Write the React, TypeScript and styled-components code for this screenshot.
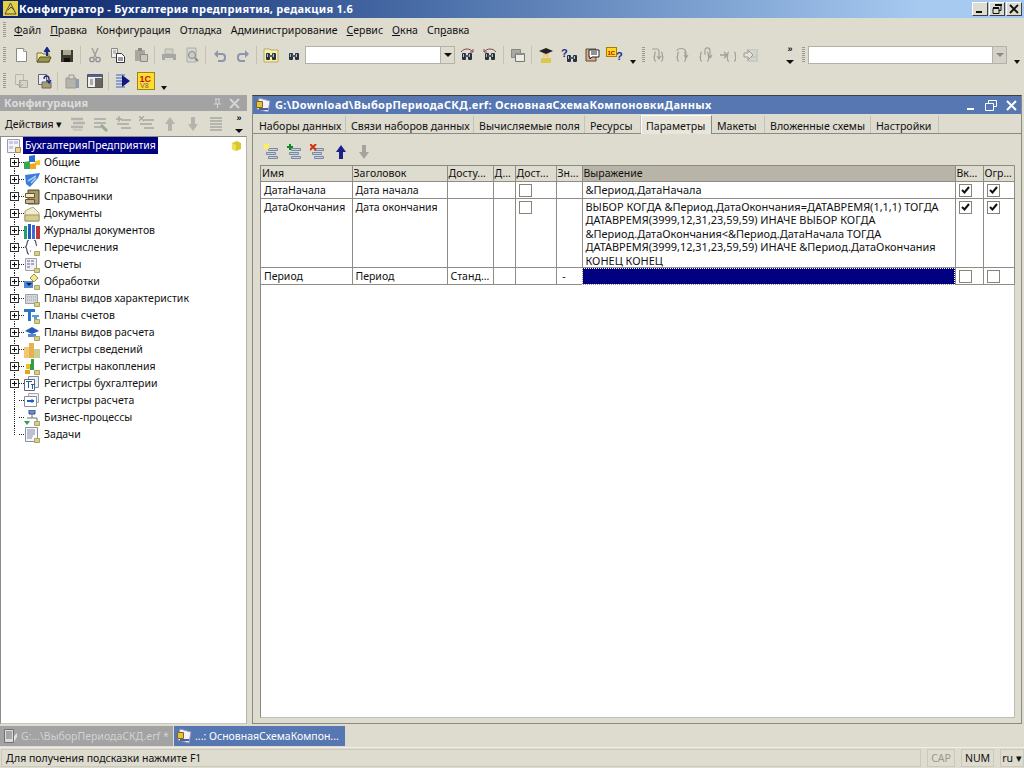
import React from 'react';
import styled, {createGlobalStyle} from 'styled-components';

const GlobalStyle = createGlobalStyle`
  html, body {
    margin: 0;
    padding: 0;
    background: #dedbcf;
  }
  * {
    box-sizing: border-box;
  }
`

const uiFont = `"Noto Sans", "Liberation Sans", sans-serif`

type IconProps = { children: React.ReactNode, size?: number }

const Ico = ({children, size = 16}: IconProps) => (
    <svg width={size} height={size} viewBox="0 0 16 16">{children}</svg>
)

// toolbar icons
const NewIcon = () => <Ico><path d="M3.500 1.500h7l3 3v10h-10z" fill="#fff" stroke="#8a8a80"/><path d="M10.500 1.500v3h3" fill="#e8e8e0" stroke="#a0a098"/></Ico>
const OpenIcon = () => <Ico><path d="M1 6h5l1 1h6v8H1z" fill="#f0e8a8" stroke="#7a7440"/><path d="M1 15l3-5h11l-2 5z" fill="#9c9448" stroke="#5a5628"/><path d="M11 9V3M8.500 5L11 1l2.500 4" stroke="#1a2a80" strokeWidth="2" fill="#1a2a80"/></Ico>
const SaveIcon = () => <Ico><path d="M2 3h12v12H2z" fill="#3c3c30"/><path d="M4 3h8v5H4z" fill="#a8a890"/><path d="M5 11h6v4H5z" fill="#111"/></Ico>
const CutIcon = () => <Ico><path d="M5 1l4 9M11 1L7 10" stroke="#a0a09c" strokeWidth="1.500" fill="none"/><circle cx="5" cy="12.500" r="2.200" fill="none" stroke="#8e9098" strokeWidth="1.300"/><circle cx="11" cy="12.500" r="2.200" fill="none" stroke="#8e9098" strokeWidth="1.300"/></Ico>
const CopyIcon = () => <Ico><path d="M1.500 1.500h6v9h-6z" fill="#eeeee8" stroke="#8a8a84"/><path d="M3 4h3M3 6h3" stroke="#8a8a84"/><path d="M6.500 6.500h5l3 3v6h-8z" fill="#fff" stroke="#333340"/><path d="M8 11h5M8 13h5" stroke="#333340"/></Ico>
const PasteIcon = () => <Ico><path d="M2 3h10v11H2z" fill="#a8a89e"/><path d="M5 1h4v3H5z" fill="#8a8a84"/><path d="M7.500 7.500h7v7h-7z" fill="#c8c8c0" stroke="#8a8a84"/></Ico>
const PrintIcon = () => <Ico><path d="M4 2h8v5H4z" fill="#cfcfc8" stroke="#b0b0a8"/><path d="M1 7h14v6H1z" fill="#a8a8a2"/><path d="M4 11h8v3H4z" fill="#d8d8d0"/></Ico>
const PreviewIcon = () => <Ico><path d="M3 1h9v14H3z" fill="#d4d4cc" stroke="#b0b0a8"/><circle cx="8" cy="8" r="3.500" fill="#c8ccd0" stroke="#8a8a84"/><path d="M11 11l3 3" stroke="#8a8a84" strokeWidth="2"/></Ico>
const UndoIcon = () => <Ico><path d="M6 3L2 7l4 4z" fill="#8f96ac"/><path d="M4 7h6a3 3 0 0 1 3 3v1a3 3 0 0 1-3 3H6" stroke="#8f96ac" strokeWidth="2" fill="none"/></Ico>
const RedoIcon = () => <Ico><path d="M10 3l4 4-4 4z" fill="#8f96ac"/><path d="M12 7H6a3 3 0 0 0-3 3v1a3 3 0 0 0 3 3h4" stroke="#8f96ac" strokeWidth="2" fill="none"/></Ico>
const Glasses = ({x = 3, y = 6}: { x?: number, y?: number }) => (
    <g><rect x={x} y={y} width="4" height="7" rx="1" fill="#2c3040"/><rect x={x + 6} y={y} width="4" height="7" rx="1" fill="#2c3040"/><rect x={x + 3} y={y + 2} width="4" height="2" fill="#556"/><rect x={x + 1} y={y + 1} width="1" height="3" fill="#9cc"/><rect x={x + 7} y={y + 1} width="1" height="3" fill="#9cc"/></g>
)
const FindFolderIcon = () => <Ico><path d="M1 2h6l1 1h7v12H1z" fill="#f6eea8" stroke="#b4ac68"/><Glasses/></Ico>
const BinocIcon = () => <Ico><Glasses/></Ico>
const BinocNextIcon = () => <Ico><Glasses/><path d="M2 5c3-4 9-4 12 0M14 5l0-3M14 5l-3 0" stroke="#804848" fill="none"/></Ico>
const BinocPrevIcon = () => <Ico><Glasses/><path d="M2 5c3-4 9-4 12 0M2 5l0-3M2 5l3 0" stroke="#804848" fill="none"/></Ico>
const WindowsIcon = () => <Ico><path d="M1.500 2.500h9v8h-9z" fill="#a8a8a2" stroke="#888880"/><path d="M5.500 6.500h9v8h-9z" fill="#ecebe4" stroke="#777770"/><path d="M5 6h10v2H5z" fill="#8c8c86"/></Ico>
const HatIcon = () => <Ico><path d="M5 6h6v4H5z" fill="#f0c890"/><path d="M3 11h10v5H3z" fill="#d8c850"/><path d="M1 4l7-3 7 3-7 3z" fill="#222"/></Ico>
const HelpBinIcon = () => <Ico><text x="0" y="10" fontFamily="Liberation Sans" fontWeight="700" fontSize="11" fill="#1c2c90">?</text><Glasses x={6} y={8}/></Ico>
const ChatIcon = () => <Ico><path d="M2 2h10v12H2z" fill="#e0a888" stroke="#505030"/><path d="M5 3h10v7H8l-2 2v-2H5z" fill="#fff" stroke="#223"/><path d="M7 5h6M7 7h6" stroke="#223"/></Ico>
const OneCHelpIcon = () => (
    <svg width="18" height="16" viewBox="0 0 18 16">
        <rect x="0.500" y="0.500" width="10" height="9" fill="#ffd820" stroke="#a08000"/>
        <text x="1.500" y="7.500" fontFamily="Liberation Sans" fontWeight="700" fontSize="6" fill="#b00">1C</text>
        <text x="10" y="13" fontFamily="Liberation Sans" fontWeight="700" fontSize="11" fill="#1c2c90">?</text>
    </svg>
)
const Braces = ({x = 0}: { x?: number }) => (
    <path transform={`translate(${x} 0)`} d="M5 5c-2 0-1 3-1.500 4.500C3 10 3 10 3 10c1 .5-.5 4 2 4.500M10 5c2 0 1 3 1.500 4.500.5.500.5.500.5.500-1 .5.500 4-2 4.500" stroke="#a0a09a" strokeWidth="1.200" fill="none"/>
)
const DebugInIcon = () => <Ico><Braces/><path d="M1 2h5c2 0 2 2 2 3v6M6 9l2 3 2-3" stroke="#a0a09a" strokeWidth="1.200" fill="none"/></Ico>
const DebugOverIcon = () => <Ico><Braces/><path d="M3 4c0-3 8-4 9 1v5M10 8l2 3 2-3" stroke="#a0a09a" strokeWidth="1.200" fill="none"/></Ico>
const DebugOutIcon = () => <Ico><Braces/><path d="M8 8V3c0-3 5-3 5 1v6M11 8l2 3 2-3" stroke="#a0a09a" strokeWidth="1.200" fill="none"/></Ico>
const DebugToIcon = () => <Ico><Braces x={4}/><path d="M0 8h6M4 5l3 3-3 3" stroke="#a0a09a" strokeWidth="1.300" fill="none"/></Ico>
const RunToIcon = () => <Ico><path d="M4 2h11v13H4z" fill="#c8c8c4"/><path d="M6 4h7M6 6h7M9 8h4M6 12h7" stroke="#dededa"/><path d="M1 6h4V3l5 5-5 5v-3H1z" fill="#e4e2d8" stroke="#9c9c94"/></Ico>

const Dis1Icon = () => <Ico><path d="M2.500 1.500h8v10h-8z" fill="none" stroke="#b8b8b0"/><path d="M6.500 7.500h8v7h-8z" fill="#d4d2c6" stroke="#acaca4"/><path d="M4 11l3 3 3-3M7 14V7" stroke="#a8a8a0" fill="none"/></Ico>
const Dis2Icon = () => <Ico><path d="M2.500 1.500h8v10h-8z" fill="#e8eef4" stroke="#667"/><path d="M6 9h9v6H6z" fill="#a8a068" stroke="#667"/><path d="M8 6c0-4 5-4 5 0v3M11 7l2 3 2-3" stroke="#1c2a80" fill="none" strokeWidth="1.300"/></Ico>
const Dis3Icon = () => <Ico><path d="M2 5h10v10H2z" fill="#b4b4ac" stroke="#9a9a94"/><path d="M5 2h5v4H5z" fill="#d8d8d0" stroke="#9a9a94"/><path d="M12 6h3v9h-3z" fill="#8c9caa"/></Ico>
const FormIcon = () => <Ico><path d="M.500 1.500h15v13H.500z" fill="#eeeeea" stroke="#555"/><path d="M1 2h14v2H1z" fill="#5060a0"/><path d="M8 5h7v9H8z" fill="#66665e"/><path d="M3 7h3M3 9h3M3 11h3" stroke="#667"/></Ico>
const RunIcon = () => <Ico><path d="M1 2h9M1 5h9M1 8h9M1 11h9M1 14h9" stroke="#6c8cd0" strokeWidth="1.400"/><path d="M7 2l8 6-8 6z" fill="#101880"/></Ico>
const V8Icon = () => (
    <svg width="18" height="18" viewBox="0 0 18 18">
        <rect x="0.500" y="0.500" width="17" height="17" fill="#ffdc30" stroke="#a08418"/>
        <text x="2.500" y="9.500" fontFamily="Liberation Sans" fontWeight="700" fontSize="9" fill="#c01010">1C</text>
        <text x="3" y="16" fontFamily="Liberation Sans" fontSize="7" fill="#666">V8</text>
    </svg>
)

const RowsBase = ({color = '#a8acb4'}: { color?: string }) => (
    <path d="M4.500 4.500h9v2h-9zM2.500 8.500h9v2h-9zM4.500 12.500h9v2h-9z" fill="#c8d0dc" stroke={color}/>
)
const RowsNew = () => <Ico><RowsBase color="#7a88a8"/><path d="M0 0h5v5H0z" fill="#ffee60"/></Ico>
const RowsAdd = () => <Ico><RowsBase color="#7a88a8"/><path d="M3 0v6M0 3h6" stroke="#0a8a20" strokeWidth="2"/></Ico>
const RowsDel = () => <Ico><RowsBase color="#7a88a8"/><path d="M0 0l6 6M6 0l-6 6" stroke="#d03010" strokeWidth="2"/></Ico>
const RowsGrayA = () => <Ico><path d="M1 3h12M3 7h12M1 11h12" stroke="#b4b4ae" strokeWidth="2.500"/><path d="M3 14h9" stroke="#b4b4ae"/></Ico>
const RowsGrayB = () => <Ico><path d="M1 3h12M1 7h12M1 11h7" stroke="#b4b4ae" strokeWidth="2"/><path d="M8 9l6 6" stroke="#9aa890" strokeWidth="3"/></Ico>
const RowsGrayC = () => <Ico><path d="M5 4h10M1 8h12M5 12h10" stroke="#b4b4ae" strokeWidth="2"/><path d="M3 0v6M0 3h6" stroke="#a8a8a2" strokeWidth="1.400"/></Ico>
const RowsGrayD = () => <Ico><path d="M5 4h10M1 8h12M5 12h10" stroke="#b4b4ae" strokeWidth="2"/><path d="M0 0l5 5M5 0l-5 5" stroke="#a8a8a2" strokeWidth="1.400"/></Ico>
const ArrowUpIcon = ({color}: { color: string }) => <Ico><path d="M8 1l5 7h-3v7H6V8H3z" fill={color}/></Ico>
const ArrowDownIcon = ({color}: { color: string }) => <Ico><path d="M6 1h4v7h3l-5 7-5-7h3z" fill={color}/></Ico>
const SortGrayIcon = () => <Ico><path d="M2 2h12M2 5h12M2 8h12M2 11h12M2 14h12" stroke="#b4b4ae" strokeWidth="2"/></Ico>

// tree icons
const Mark = () => <path d="M10.500 11.500h5v4h-5z" fill="#d8d088" stroke="#a8a468"/>
const RootIcon = () => <Ico><path d="M1.500 1.500h12v13h-12z" fill="#f4f4f8" stroke="#9a9ab0"/><path d="M3 3h4v3H3zM8 3h4v3H8zM3 8h4v3H3z" fill="#d0c8e0"/><path d="M9.500 9.500h5v5h-5z" fill="#f0d088" stroke="#a09050"/></Ico>
const CommonIcon = () => <Ico><path d="M5 1l6-1v7H5z" fill="#2c6cd0"/><path d="M0 7l6-1v8H0z" fill="#38a850"/><path d="M11 6l5-1v5h-5z" fill="#f4c420"/><path d="M6 9l6-1v6H6z" fill="#f0a820"/></Ico>
const ConstIcon = () => <Ico><path d="M1 3l15-2-2 5-8 9-4-3z" fill="#3c7cdc"/><path d="M4 9l8-5M7 11l5-5" stroke="#a8d0f8" strokeWidth="1.500"/></Ico>
const CatalogIcon = () => <Ico><path d="M4 1h11v14H4z" fill="#a89868" stroke="#504830"/><path d="M1.500 4.500h9v4h-9z" fill="#f0e8c0" stroke="#605838"/><path d="M1.500 10.500h9v4h-9z" fill="#c8b888" stroke="#605838"/></Ico>
const DocsIcon = () => <Ico><path d="M1 5l8-4 6 6v8H1z" fill="#f0ecd0" stroke="#a8a478"/><path d="M1 9h14v6H1z" fill="#d8cc90" stroke="#a09868"/></Ico>
const JournalIcon = () => <Ico><path d="M0 3h3v13H0z" fill="#20a070"/><path d="M4 1h3v15H4z" fill="#2858c0"/><path d="M8 2h3v14H8z" fill="#3c6cd4"/><path d="M12 3h4v13h-4z" fill="#c03830"/></Ico>
const EnumIcon = () => <Ico><path d="M5 0C2 0 4 6 1.500 7 4 8 2 14 5 14M10 0c3 0 1 5 3 6" stroke="#404860" strokeWidth="1.100" fill="none"/><path d="M6 11h1" stroke="#404860"/><Mark/></Ico>
const ReportIcon = () => <Ico><path d="M1.500 1.500h11v12h-11z" fill="#f0f0f4" stroke="#a0a0a8"/><path d="M3 3h3v2H3zM7 3h3v2H7zM3 6h3v2H3zM7 6h3v2H7zM3 9h3v2H3z" fill="#a8a8c0"/><Mark/></Ico>
const ProcessIcon = () => <Ico><path d="M10 0l4 4-4 4-4-4z" fill="#f4e890" stroke="#a09040"/><path d="M0 7h9v7H0z" fill="#5088d8"/><path d="M2 9l3 3 3-3" fill="#123"/><Mark/></Ico>
const PlanCharIcon = () => <Ico><path d="M1.500 3.500h12v9h-12z" fill="#d8d8dc" stroke="#98a0a8"/><path d="M3 6h9M3 9h9" stroke="#9098a0" strokeDasharray="1 1"/><Mark/></Ico>
const PlanAccIcon = () => <Ico><path d="M0 1h11v3H0zM4 4h3v9H4z" fill="#2878c8"/><path d="M8 7h7v2H8zM10 9h3v3h-3z" fill="#50a0d8"/><Mark/></Ico>
const PlanCalcIcon = () => <Ico><path d="M1 6l7-4 7 4-7 3z" fill="#2858b8"/><path d="M4 9h8v3H4z" fill="#5888d8"/><Mark/></Ico>
const RegInfoIcon = () => <Ico><path d="M0 5h5v11H0z" fill="#f0c870"/><path d="M5 1h5v15H5z" fill="#e8b050"/><path d="M10 7h6v9h-6z" fill="#c8d090"/></Ico>
const RegAccIcon = () => <Ico><path d="M7 0h3v5H7z" fill="#30a040"/><path d="M2 5h4v5H2z" fill="#f0c020"/><path d="M6 5h4v6H6z" fill="#30a040"/><path d="M1 11h5v4H1z" fill="#e8a020"/><Mark/></Ico>
const RegBuhIcon = () => <Ico><path d="M4.500 .5h10v11h-10z" fill="#f0f0f4" stroke="#8890a0"/><path d="M.500 3.500h10v11h-10z" fill="#fff" stroke="#606878"/><path d="M2 5h6v1H2zM4 6h1v6H4zM7 8h3v1H7zM8 9h1v4H8z" fill="#2060a8"/></Ico>
const RegCalcIcon = () => <Ico><path d="M4.500 .5h10v9h-10z" fill="#f0f0f4" stroke="#a0a8b0"/><path d="M.500 3.500h12v10h-12z" fill="#fff" stroke="#8890a0"/><path d="M3 8h7M8 6.500v3" stroke="#2060b8" strokeWidth="2"/></Ico>
const BizIcon = () => <Ico><path d="M5 0h6v4H5z" fill="#6890d8" stroke="#405090"/><path d="M8 4v4M3 8h10v3" stroke="#707070" fill="none"/><path d="M0 11h6l-3 4z" fill="#30a048"/><Mark/></Ico>
const TaskIcon = () => <Ico><path d="M1.500 .5h12v14h-12z" fill="#f8f8fc" stroke="#8890a0"/><path d="M3 3h8M3 5h8M3 7h8M3 9h6M3 11h5" stroke="#8088a8"/><Mark/></Ico>
const CubeIcon = () => <svg width="11" height="12" viewBox="0 0 11 12"><path d="M1 3l5-2 4 2v6l-5 2-4-2z" fill="#d8c830"/><path d="M1 3l4 2v6l-4-2z" fill="#f0e050"/></svg>
const DocTabIcon = () => <Ico><path d="M2.500 1.500h9v13h-9z" fill="#dcdcdc" stroke="#707070"/><path d="M4 4h6M4 6h6M4 8h6M4 10h6" stroke="#707070"/><path d="M12 8l3-3v4l-3 5z" fill="#e0e0e0"/></Ico>
const SchemeIcon = () => <Ico><path d="M4 1l11 3-2 11-11-3z" fill="#f4f4f8" stroke="#9098c0"/><path d="M1.500 4.500h6v6h-6z" fill="#e8c040" stroke="#806818"/><path d="M4 11h9v2H4z" fill="#506098"/></Ico>

const TitleBar = styled.div`
  height: 18px;
  flex: none;
  display: flex;
  align-items: center;
  padding: 0 2px 1px 3px;
  gap: 1px;
  background: linear-gradient(90deg, #0a246a 0%, #4a6ea8 42%, #a6caf0 90%, #a6caf0 100%);
`

const AppTitle = styled.div`
  flex: 1;
  color: #fff;
  font: 700 11px ${uiFont};
  letter-spacing: 0.27px;
  white-space: nowrap;
`

const TitleButtons = styled.div`
  display: flex;
  gap: 1px;
`

const TitleButton = styled.div`
  width: 16px;
  height: 14px;
  background: #dedbcf;
  border: 1px solid;
  border-color: #fff #404040 #404040 #fff;
  display: flex;
  align-items: center;
  justify-content: center;
`

const MenuBar = styled.div`
  height: 24px;
  flex: none;
  display: flex;
  align-items: center;
  padding-left: 3px;
  background: #dedbcf;
`

const Grip = styled.div`
  width: 3px;
  height: 16px;
  flex: none;
  background: repeating-linear-gradient(180deg, #9c9a90 0 1px, transparent 1px 2px);
`

const MenuItems = styled.div`
  display: flex;
  margin-left: 5px;
`

const MenuItem = styled.div`
  padding: 0 3px;
  margin-right: 3px;
  font: 400 10.500px ${uiFont};
  color: #111;
  white-space: nowrap;
  u {
    text-underline-offset: 1px;
  }
`

const ToolRow = styled.div`
  height: 26px;
  flex: none;
  display: flex;
  align-items: center;
  padding-left: 3px;
  background: #dedbcf;
`

const ToolBtn = styled.div`
  width: 23px;
  height: 22px;
  flex: none;
  display: flex;
  align-items: center;
  justify-content: center;
`

const ToolSep = styled.div`
  width: 5px;
  height: 18px;
  flex: none;
  position: relative;
  &::after {
    content: '';
    position: absolute;
    left: 2px;
    top: 0;
    bottom: 0;
    width: 1px;
    background: #c4c2b6;
  }
`

const GripGap = styled.div<{ $width?: number }>`
  width: ${p => p.$width ?? 3}px;
  flex: none;
`

const ToolInput = styled.div<{ $width: number }>`
  width: ${p => p.$width}px;
  height: 18px;
  flex: none;
  display: flex;
  justify-content: flex-end;
  background: #fff;
  border: 1px solid #b4b2a6;
`

const DropBtn = styled.div<{ $disabled?: boolean }>`
  width: 14px;
  display: flex;
  align-items: center;
  justify-content: center;
  background: ${p => p.$disabled ? '#d4d2c8' : '#dedbcf'};
  border-left: 1px solid #b4b2a6;
  &::after {
    content: '';
    border: 4px solid transparent;
    border-top: 4px solid ${p => p.$disabled ? '#8a8a84' : '#111'};
    border-bottom: 0;
  }
`

const Chevron = styled.div`
  width: 14px;
  height: 22px;
  flex: none;
  display: flex;
  align-items: flex-end;
  justify-content: center;
  padding-bottom: 2px;
  &::after {
    content: '';
    border: 3.500px solid transparent;
    border-top: 4px solid #111;
    border-bottom: 0;
  }
`

const More = styled.div`
  width: 16px;
  height: 24px;
  flex: none;
  display: flex;
  flex-direction: column;
  align-items: center;
  justify-content: space-between;
  padding: 2px 0 3px;
  font: 700 9px/8px "Liberation Sans", sans-serif;
  color: #111;
  &::after {
    content: '';
    border: 4px solid transparent;
    border-top: 4px solid #111;
    border-bottom: 0;
  }
`

const Workspace = styled.div`
  flex: 1;
  min-height: 0;
  display: flex;
  gap: 5px;
  padding: 1px 2px 1px 0;
  background: #dedbcf;
`

const LeftPanel = styled.div`
  width: 247px;
  flex: none;
  display: flex;
  flex-direction: column;
`

const PanelHeader = styled.div`
  height: 16px;
  flex: none;
  display: flex;
  align-items: center;
  padding: 0 4px 0 4px;
  background: #a3a3a3;
  color: #dcdcdc;
  font: 700 11px ${uiFont};
`

const PanelTitle = styled.div`
  flex: 1;
  padding-bottom: 2px;
`

const PanelGlyph = styled.div`
  width: 17px;
  display: flex;
  justify-content: center;
`

const ActionBar = styled.div`
  height: 25px;
  flex: none;
  display: flex;
  align-items: center;
  padding-left: 5px;
`

const ActionLabel = styled.div`
  width: 61.500px;
  flex: none;
  font: 400 10.500px ${uiFont};
  color: #111;
  white-space: nowrap;
`

const ActionSpacer = styled.div`
  flex: 1;
`

const Tree = styled.div`
  flex: 1;
  min-height: 0;
  background: #fff;
  border: 1px solid #8c8c88;
  border-right-color: #b4b4ac;
  border-bottom-color: #c8c8c0;
`

const RootRow = styled.div`
  height: 17px;
  display: flex;
  align-items: center;
  padding: 0 4px 0 5px;
`

const RootLabel = styled.div`
  margin-left: 1px;
  padding: 0 2px;
  height: 17px;
  background: #000080;
  color: #fff;
  font: 400 10.400px/16px ${uiFont};
  white-space: nowrap;
`

const RootSpacer = styled.div`
  flex: 1;
`

const TreeRow = styled.div<{ $last?: boolean }>`
  height: 17px;
  display: flex;
  align-items: center;
  padding-left: 9px;
  position: relative;
  &::before {
    content: '';
    position: absolute;
    left: 13px;
    top: 0;
    height: ${p => p.$last ? '9px' : '17px'};
    border-left: 1px dotted #222;
  }
`

const Expander = styled.div`
  width: 9px;
  height: 9px;
  flex: none;
  position: relative;
  z-index: 1;
  background: linear-gradient(#111, #111) center / 5px 1px no-repeat, linear-gradient(#111, #111) center / 1px 5px no-repeat, #fff;
  border: 1px solid #333;
`

const NoExpander = styled.div`
  width: 9px;
  flex: none;
`

const TreeDots = styled.div`
  width: 5px;
  flex: none;
  border-top: 1px dotted #222;
`

const TreeIcon = styled.div`
  width: 16px;
  height: 16px;
  flex: none;
  margin-right: 4px;
`

const TreeText = styled.div`
  padding-bottom: 2px;
  font: 400 10.500px ${uiFont};
  color: #111;
  white-space: nowrap;
`

const RightWindow = styled.div`
  flex: 1;
  min-width: 0;
  display: flex;
  flex-direction: column;
  border: 1px solid #8a8a84;
  border-top-color: #404040;
`

const WindowTitle = styled.div`
  height: 18px;
  flex: none;
  display: flex;
  align-items: center;
  padding-left: 2px;
  gap: 4px;
  background: #5677b1;
`

const WindowText = styled.div`
  flex: 1;
  padding-bottom: 2px;
  color: #fff;
  font: 700 11px ${uiFont};
  letter-spacing: 0.29px;
  white-space: nowrap;
`

const WindowGlyphs = styled.div`
  display: flex;
`

const WindowGlyph = styled.div`
  width: 20px;
  display: flex;
  align-items: center;
  justify-content: center;
`

const TabsStrip = styled.div`
  height: 20px;
  flex: none;
  display: flex;
  align-items: flex-end;
  padding-left: 1px;
  border-bottom: 1px solid #8a8a84;
`

const Tab = styled.div<{ $active?: boolean, $width: number }>`
  width: ${p => p.$width}px;
  flex: none;
  height: ${p => p.$active ? '19px' : '18px'};
  margin-bottom: ${p => p.$active ? '-1px' : '0'};
  padding-left: 4px;
  font: 400 10.600px/${p => p.$active ? '20px' : '20px'} ${uiFont};
  color: #111;
  white-space: nowrap;
  background: ${p => p.$active ? '#e8e5da' : 'transparent'};
  border-right: 1px solid ${p => p.$active ? '#8a8a84' : '#c4c2b6'};
  border-left: 1px solid ${p => p.$active ? '#fff' : 'transparent'};
  border-top: 1px solid ${p => p.$active ? '#fff' : 'transparent'};
`

const TabPane = styled.div`
  flex: 1;
  min-height: 0;
  display: flex;
  flex-direction: column;
  padding: 0 6px 5px 7px;
`

const PaneTools = styled.div`
  height: 31px;
  flex: none;
  display: flex;
  align-items: center;
  padding-top: 4px;
`

const TableFrame = styled.div`
  flex: 1;
  min-height: 0;
  background: #fff;
  border: 1px solid #8a8a84;
  border-right-color: #c0beb2;
  border-bottom-color: #c0beb2;
`

const Table = styled.table`
  border-collapse: collapse;
  table-layout: fixed;
  width: 753px;
  font: 400 10.500px ${uiFont};
  color: #111;
`

const HeadCell = styled.th<{ $current?: boolean }>`
  height: 15px;
  padding: 0 1px;
  text-align: left;
  font-weight: 400;
  background: ${p => p.$current ? '#b8b5a8' : '#dedbcf'};
  border: 1px solid #8e8c84;
  border-top: 0;
  border-left: 0;
  white-space: nowrap;
  overflow: hidden;
`

const Cell = styled.td<{ $height: number, $selected?: boolean, $wide?: boolean }>`
  height: ${p => p.$height}px;
  padding: ${p => p.$wide ? '1px' : '2px'} 2px 0 3px;
  vertical-align: top;
  font-size: ${p => p.$wide ? '10.950px' : '10.500px'};
  line-height: 13.600px;
  border: 1px solid #8e8c84;
  border-left: 0;
  border-top: 0;
  overflow: hidden;
  white-space: pre-wrap;
  ${p => p.$selected ? `
    background: #000080;
    outline: 1px dotted #fff;
    outline-offset: -1px;
  ` : ''}
`

const Check = styled.div`
  width: 13px;
  height: 13px;
  border: 1px solid #85837a;
  background: #fff;
  display: flex;
  align-items: center;
  justify-content: center;
`

const TaskBar = styled.div`
  height: 22px;
  flex: none;
  display: flex;
  gap: 1px;
  padding-top: 1px;
  background: #dedbcf;
`

const TaskTab = styled.div<{ $active?: boolean, $width: number }>`
  width: ${p => p.$width}px;
  height: 20px;
  display: flex;
  align-items: center;
  padding-left: 2px;
  gap: 3px;
  background: ${p => p.$active ? '#5677b1' : '#a3a3a3'};
  color: ${p => p.$active ? '#fff' : '#d2d2d2'};
  font: 400 10.500px ${uiFont};
  white-space: nowrap;
`

const StatusBar = styled.div`
  height: 21px;
  flex: none;
  display: flex;
  align-items: center;
  gap: 6px;
  padding: 1px 0 1px 1px;
  background: #dedbcf;
  border-top: 1px solid #f0eee6;
  font: 400 10.500px ${uiFont};
  color: #111;
`

const StatusField = styled.div<{ $width?: number, $muted?: boolean }>`
  ${p => p.$width ? `width: ${p.$width}px; flex: none; text-align: center;` : 'flex: 1; padding-left: 4px;'}
  height: 18px;
  line-height: 17px;
  white-space: nowrap;
  color: ${p => p.$muted ? '#9a988e' : '#111'};
  border: 1px solid #cbc9bc;
`

const AppRoot = styled.div`
  width: 1024px;
  height: 768px;
  display: flex;
  flex-direction: column;
  overflow: hidden;
`

const mainTools: React.ReactNode[][] = [
    [<NewIcon/>, <OpenIcon/>, <SaveIcon/>],
    [<CutIcon/>, <CopyIcon/>, <PasteIcon/>],
    [<PrintIcon/>, <PreviewIcon/>],
    [<UndoIcon/>, <RedoIcon/>],
    [<FindFolderIcon/>, <BinocIcon/>],
]
const helpTools: React.ReactNode[][] = [
    [<BinocNextIcon/>, <BinocPrevIcon/>],
    [<WindowsIcon/>],
    [<HatIcon/>, <HelpBinIcon/>, <ChatIcon/>, <OneCHelpIcon/>],
]
const secondTools: React.ReactNode[][] = [
    [<Dis1Icon/>, <Dis2Icon/>],
    [<Dis3Icon/>, <FormIcon/>],
    [<RunIcon/>, <V8Icon/>],
]
const debugTools: React.ReactNode[] = [<DebugInIcon/>, <DebugOverIcon/>, <DebugOutIcon/>, <DebugToIcon/>, <RunToIcon/>]

const menu: [string, string, string][] = [
    ['', 'Ф', 'айл'],
    ['', 'П', 'равка'],
    ['', '', 'Конфигурация'],
    ['', '', 'Отладка'],
    ['', '', 'Администрирование'],
    ['', 'С', 'ервис'],
    ['', 'О', 'кна'],
    ['Сп', 'р', 'авка'],
]

const treeItems: { label: string, icon: React.ReactNode, leaf?: boolean }[] = [
    {label: 'Общие', icon: <CommonIcon/>},
    {label: 'Константы', icon: <ConstIcon/>},
    {label: 'Справочники', icon: <CatalogIcon/>},
    {label: 'Документы', icon: <DocsIcon/>},
    {label: 'Журналы документов', icon: <JournalIcon/>},
    {label: 'Перечисления', icon: <EnumIcon/>},
    {label: 'Отчеты', icon: <ReportIcon/>},
    {label: 'Обработки', icon: <ProcessIcon/>},
    {label: 'Планы видов характеристик', icon: <PlanCharIcon/>},
    {label: 'Планы счетов', icon: <PlanAccIcon/>},
    {label: 'Планы видов расчета', icon: <PlanCalcIcon/>},
    {label: 'Регистры сведений', icon: <RegInfoIcon/>},
    {label: 'Регистры накопления', icon: <RegAccIcon/>},
    {label: 'Регистры бухгалтерии', icon: <RegBuhIcon/>},
    {label: 'Регистры расчета', icon: <RegCalcIcon/>, leaf: true},
    {label: 'Бизнес-процессы', icon: <BizIcon/>, leaf: true},
    {label: 'Задачи', icon: <TaskIcon/>, leaf: true},
]

const tabs = [
    {label: 'Наборы данных', width: 92},
    {label: 'Связи наборов данных', width: 128},
    {label: 'Вычисляемые поля', width: 111},
    {label: 'Ресурсы', width: 56},
    {label: 'Параметры', width: 71, active: true},
    {label: 'Макеты', width: 53},
    {label: 'Вложенные схемы', width: 106},
    {label: 'Настройки', width: 68},
]

const columns = [
    {label: 'Имя', width: 91},
    {label: 'Заголовок', width: 95},
    {label: 'Досту...', width: 46},
    {label: 'Д...', width: 22},
    {label: 'Дост...', width: 41},
    {label: 'Зн...', width: 26},
    {label: 'Выражение', width: 373, current: true},
    {label: 'Вк...', width: 28},
    {label: 'Огр...', width: 31},
]

const endExpression = 'ВЫБОР КОГДА &Период.ДатаОкончания=ДАТАВРЕМЯ(1,1,1) ТОГДА\nДАТАВРЕМЯ(3999,12,31,23,59,59) ИНАЧЕ ВЫБОР КОГДА\n&Период.ДатаОкончания<&Период.ДатаНачала ТОГДА\nДАТАВРЕМЯ(3999,12,31,23,59,59) ИНАЧЕ &Период.ДатаОкончания\nКОНЕЦ КОНЕЦ'

const ToolGroups = ({groups}: { groups: React.ReactNode[][] }) => (
    <>
        {groups.map((group, i) => (
            <React.Fragment key={i}>
                {i > 0 && <ToolSep/>}
                {group.map((icon, j) => <ToolBtn key={j}>{icon}</ToolBtn>)}
            </React.Fragment>
        ))}
    </>
)

const TickBox = ({checked}: { checked?: boolean }) => (
    <Check>
        {checked && (
            <svg width="9" height="8" viewBox="0 0 9 8">
                <path d="M1 4l2.500 2.500L8 1" stroke="#111" strokeWidth="2" fill="none"/>
            </svg>
        )}
    </Check>
)

const App = () => {
    return (
        <AppRoot>
            <GlobalStyle/>
            <TitleBar>
                <svg width="15" height="15" viewBox="0 0 15 15">
                    <rect width="15" height="15" fill="#e8d040"/>
                    <path d="M2 13L7.500 2 13 13zM5 9l3-3 3 3" stroke="#405060" fill="none"/>
                </svg>
                <AppTitle>Конфигуратор - Бухгалтерия предприятия, редакция 1.6</AppTitle>
                <TitleButtons>
                    <TitleButton>
                        <svg width="10" height="10" viewBox="0 0 10 10"><path d="M1 7h6v2H1z" fill="#111"/></svg>
                    </TitleButton>
                    <TitleButton>
                        <svg width="10" height="10" viewBox="0 0 10 10"><path d="M3 1.500h6v5H7M1 4.500h6v5H1z" stroke="#111" fill="none"/><path d="M3 0h7v2H3zM1 3h6v2H1z" fill="#111"/></svg>
                    </TitleButton>
                    <TitleButton>
                        <svg width="10" height="10" viewBox="0 0 10 10"><path d="M1 1l8 8M9 1l-8 8" stroke="#111" strokeWidth="1.800"/></svg>
                    </TitleButton>
                </TitleButtons>
            </TitleBar>

            <MenuBar>
                <Grip/>
                <MenuItems>
                    {menu.map(([before, key, after]) => (
                        <MenuItem key={before + key + after}>{before}{key && <u>{key}</u>}{after}</MenuItem>
                    ))}
                </MenuItems>
            </MenuBar>

            <ToolRow>
                <Grip/>
                <GripGap/>
                <ToolGroups groups={mainTools}/>
                <ToolInput $width={150}><DropBtn/></ToolInput>
                <ToolGroups groups={helpTools}/>
                <Chevron/>
                <GripGap $width={2}/>
                <Grip/>
                <GripGap $width={2}/>
                {debugTools.map((icon, i) => <ToolBtn key={i}>{icon}</ToolBtn>)}
                <ActionSpacer/>
                <More>»</More>
                <GripGap $width={4}/>
                <Grip/>
                <GripGap/>
                <ToolInput $width={199}><DropBtn $disabled/></ToolInput>
                <GripGap/>
                <Chevron/>
            </ToolRow>

            <ToolRow>
                <Grip/>
                <GripGap/>
                <ToolGroups groups={secondTools}/>
                <Chevron/>
            </ToolRow>

            <Workspace>
                <LeftPanel>
                    <PanelHeader>
                        <PanelTitle>Конфигурация</PanelTitle>
                        <PanelGlyph>
                            <svg width="9" height="10" viewBox="0 0 9 10"><path d="M2 1h5M3 1v5M6 1v5M1 6h7M4.500 6v4" stroke="#d4d4d4"/></svg>
                        </PanelGlyph>
                        <PanelGlyph>
                            <svg width="11" height="11" viewBox="0 0 11 11"><path d="M1 1l9 9M10 1l-9 9" stroke="#d4d4d4" strokeWidth="2"/></svg>
                        </PanelGlyph>
                    </PanelHeader>
                    <ActionBar>
                        <ActionLabel>Действия ▾</ActionLabel>
                        <ToolBtn><RowsGrayA/></ToolBtn>
                        <ToolBtn><RowsGrayB/></ToolBtn>
                        <ToolBtn><RowsGrayC/></ToolBtn>
                        <ToolBtn><RowsGrayD/></ToolBtn>
                        <ToolBtn><ArrowUpIcon color="#b4b4ae"/></ToolBtn>
                        <ToolBtn><ArrowDownIcon color="#b4b4ae"/></ToolBtn>
                        <ToolBtn><SortGrayIcon/></ToolBtn>
                        <ActionSpacer/>
                        <More>»</More>
                    </ActionBar>
                    <Tree>
                        <RootRow>
                            <RootIcon/>
                            <RootLabel>БухгалтерияПредприятия</RootLabel>
                            <RootSpacer/>
                            <CubeIcon/>
                        </RootRow>
                        {treeItems.map((item, i) => (
                            <TreeRow key={item.label} $last={i === treeItems.length - 1}>
                                {item.leaf ? <NoExpander/> : <Expander/>}
                                <TreeDots/>
                                <TreeIcon>{item.icon}</TreeIcon>
                                <TreeText>{item.label}</TreeText>
                            </TreeRow>
                        ))}
                    </Tree>
                </LeftPanel>

                <RightWindow>
                    <WindowTitle>
                        <SchemeIcon/>
                        <WindowText>G:\Download\ВыборПериодаСКД.erf: ОсновнаяСхемаКомпоновкиДанных</WindowText>
                        <WindowGlyphs>
                            <WindowGlyph>
                                <svg width="11" height="11" viewBox="0 0 11 11"><path d="M1 8h7v2H1z" fill="#fff"/></svg>
                            </WindowGlyph>
                            <WindowGlyph>
                                <svg width="12" height="11" viewBox="0 0 12 11"><path d="M3.500 3V.5h8v6H9M.5 3.500h8v7h-8z" stroke="#fff" fill="none"/></svg>
                            </WindowGlyph>
                            <WindowGlyph>
                                <svg width="11" height="11" viewBox="0 0 11 11"><path d="M1 1l9 9M10 1l-9 9" stroke="#fff" strokeWidth="2"/></svg>
                            </WindowGlyph>
                        </WindowGlyphs>
                    </WindowTitle>
                    <TabsStrip>
                        {tabs.map(tab => (
                            <Tab key={tab.label} $width={tab.width} $active={tab.active}>{tab.label}</Tab>
                        ))}
                    </TabsStrip>
                    <TabPane>
                        <PaneTools>
                            <ToolBtn><RowsNew/></ToolBtn>
                            <ToolBtn><RowsAdd/></ToolBtn>
                            <ToolBtn><RowsDel/></ToolBtn>
                            <ToolBtn><ArrowUpIcon color="#1a2288"/></ToolBtn>
                            <ToolBtn><ArrowDownIcon color="#a4a4a0"/></ToolBtn>
                        </PaneTools>
                        <TableFrame>
                            <Table>
                                <colgroup>
                                    {columns.map(col => <col key={col.label} width={col.width}/>)}
                                </colgroup>
                                <thead>
                                <tr>
                                    {columns.map(col => <HeadCell key={col.label} $current={col.current}>{col.label}</HeadCell>)}
                                </tr>
                                </thead>
                                <tbody>
                                <tr>
                                    <Cell $height={17}>ДатаНачала</Cell>
                                    <Cell $height={17}>Дата начала</Cell>
                                    <Cell $height={17}/>
                                    <Cell $height={17}/>
                                    <Cell $height={17}><TickBox/></Cell>
                                    <Cell $height={17}/>
                                    <Cell $height={17} $wide>&amp;Период.ДатаНачала</Cell>
                                    <Cell $height={17}><TickBox checked/></Cell>
                                    <Cell $height={17}><TickBox checked/></Cell>
                                </tr>
                                <tr>
                                    <Cell $height={69}>ДатаОкончания</Cell>
                                    <Cell $height={69}>Дата окончания</Cell>
                                    <Cell $height={69}/>
                                    <Cell $height={69}/>
                                    <Cell $height={69}><TickBox/></Cell>
                                    <Cell $height={69}/>
                                    <Cell $height={69} $wide>{endExpression}</Cell>
                                    <Cell $height={69}><TickBox checked/></Cell>
                                    <Cell $height={69}><TickBox checked/></Cell>
                                </tr>
                                <tr>
                                    <Cell $height={17}>Период</Cell>
                                    <Cell $height={17}>Период</Cell>
                                    <Cell $height={17}>Станд...</Cell>
                                    <Cell $height={17}/>
                                    <Cell $height={17}/>
                                    <Cell $height={17}> -</Cell>
                                    <Cell $height={17} $selected/>
                                    <Cell $height={17}><TickBox/></Cell>
                                    <Cell $height={17}><TickBox/></Cell>
                                </tr>
                                </tbody>
                            </Table>
                        </TableFrame>
                    </TabPane>
                </RightWindow>
            </Workspace>

            <TaskBar>
                <TaskTab $width={173}><DocTabIcon/>G:...\ВыборПериодаСКД.erf *</TaskTab>
                <TaskTab $width={171} $active><SchemeIcon/>...: ОсновнаяСхемаКомпон...</TaskTab>
            </TaskBar>

            <StatusBar>
                <StatusField>Для получения подсказки нажмите F1</StatusField>
                <StatusField $width={28} $muted>CAP</StatusField>
                <StatusField $width={33}>NUM</StatusField>
                <StatusField $width={24}>ru ▾</StatusField>
            </StatusBar>
        </AppRoot>
    );
};

export default App;
